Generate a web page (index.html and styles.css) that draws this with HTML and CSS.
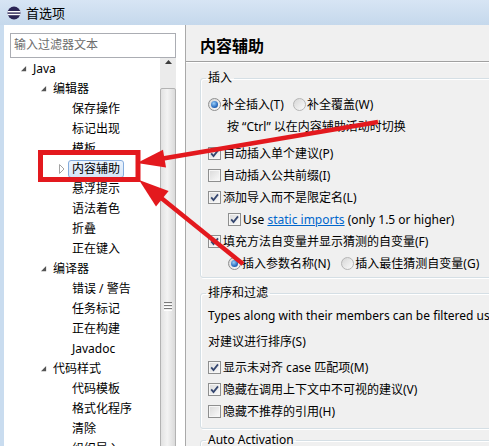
FILE: index.html
```html
<!DOCTYPE html>
<html lang="zh-CN">

<head>
    <meta charset="UTF-8">
    <title>首选项</title>
    <link rel="stylesheet" href="styles.css">
</head>

<body>
    <div class="window">
        <div class="titlebar">
            <svg class="app-icon" viewBox="0 0 14 14">
                <circle cx="7" cy="7" r="6.5" fill="#2c2656"/>
                <rect x="0.5" y="5" width="13" height="1.4" fill="#fff"/>
                <rect x="0.5" y="7.8" width="13" height="1.4" fill="#fff"/>
            </svg>
            <span>首选项</span>
        </div>

        <div class="content">
            <!-- left: filter + tree -->
            <aside class="nav">
                <div class="filter">输入过滤器文本</div>
                <div class="tree-wrap">
                    <ul class="tree">
                        <li class="item lv0"><span class="twisty"><svg class="open" viewBox="0 0 7 7"><polygon points="6,0 6,6 0,6"/></svg></span><span class="label">Java</span></li>
                        <li class="item lv1"><span class="twisty"><svg class="open" viewBox="0 0 7 7"><polygon points="6,0 6,6 0,6"/></svg></span><span class="label">编辑器</span></li>
                        <li class="item lv2"><span class="twisty"></span><span class="label">保存操作</span></li>
                        <li class="item lv2"><span class="twisty"></span><span class="label">标记出现</span></li>
                        <li class="item lv2"><span class="twisty"></span><span class="label">模板</span></li>
                        <li class="item lv2"><span class="twisty"><svg class="closed" viewBox="0 0 6 10"><polygon points="0.5,0.5 5,5 0.5,9.5"/></svg></span><span class="label selected">内容辅助</span></li>
                        <li class="item lv2"><span class="twisty"></span><span class="label">悬浮提示</span></li>
                        <li class="item lv2"><span class="twisty"></span><span class="label">语法着色</span></li>
                        <li class="item lv2"><span class="twisty"></span><span class="label">折叠</span></li>
                        <li class="item lv2"><span class="twisty"></span><span class="label">正在键入</span></li>
                        <li class="item lv1"><span class="twisty"><svg class="open" viewBox="0 0 7 7"><polygon points="6,0 6,6 0,6"/></svg></span><span class="label">编译器</span></li>
                        <li class="item lv2"><span class="twisty"></span><span class="label">错误 / 警告</span></li>
                        <li class="item lv2"><span class="twisty"></span><span class="label">任务标记</span></li>
                        <li class="item lv2"><span class="twisty"></span><span class="label">正在构建</span></li>
                        <li class="item lv2"><span class="twisty"></span><span class="label">Javadoc</span></li>
                        <li class="item lv1"><span class="twisty"><svg class="open" viewBox="0 0 7 7"><polygon points="6,0 6,6 0,6"/></svg></span><span class="label">代码样式</span></li>
                        <li class="item lv2"><span class="twisty"></span><span class="label">代码模板</span></li>
                        <li class="item lv2"><span class="twisty"></span><span class="label">格式化程序</span></li>
                        <li class="item lv2"><span class="twisty"></span><span class="label">清除</span></li>
                        <li class="item lv2"><span class="twisty"></span><span class="label">组织导入</span></li>
                    </ul>
                    <div class="scrollbar">
                        <div class="sb-up"><svg viewBox="0 0 7 4"><polygon points="0,4 3.5,0 7,4"/></svg></div>
                        <div class="sb-thumb"><span class="grip"></span></div>
                    </div>
                </div>
            </aside>

            <!-- right: preference page -->
            <main class="page">
                <h1>内容辅助</h1>

                <fieldset class="group">
                    <legend>插入</legend>
                    <div class="row first">
                        <span class="radio on"></span><span>补全插入(T)</span>
                        <span class="radio alt"></span><span>补全覆盖(W)</span>
                    </div>
                    <div class="row hint">按 “Ctrl” 以在内容辅助活动时切换</div>
                    <div class="row spaced"><span class="box"><svg viewBox="0 0 11 11"><path d="M2.2 5.4l2.3 2.6L9 2.4"/></svg></span><span>自动插入单个建议(P)</span></div>
                    <div class="row"><span class="box"></span><span>自动插入公共前缀(I)</span></div>
                    <div class="row"><span class="box"><svg viewBox="0 0 11 11"><path d="M2.2 5.4l2.3 2.6L9 2.4"/></svg></span><span>添加导入而不是限定名(L)</span></div>
                    <div class="row nested"><span class="box"><svg viewBox="0 0 11 11"><path d="M2.2 5.4l2.3 2.6L9 2.4"/></svg></span><span>Use <a class="link">static imports</a> (only 1.5 or higher)</span></div>
                    <div class="row"><span class="box"><svg viewBox="0 0 11 11"><path d="M2.2 5.4l2.3 2.6L9 2.4"/></svg></span><span>填充方法自变量并显示猜测的自变量(F)</span></div>
                    <div class="row nested">
                        <span class="radio on"></span><span>插入参数名称(N)</span>
                        <span class="radio alt wide"></span><span>插入最佳猜测自变量(G)</span>
                    </div>
                </fieldset>

                <fieldset class="group sorting">
                    <legend>排序和过滤</legend>
                    <div class="row first">Types along with their members can be filtered using type filters.</div>
                    <div class="row gap">对建议进行排序(S)</div>
                    <div class="row gap"><span class="box"><svg viewBox="0 0 11 11"><path d="M2.2 5.4l2.3 2.6L9 2.4"/></svg></span><span>显示未对齐 case 匹配项(M)</span></div>
                    <div class="row"><span class="box"><svg viewBox="0 0 11 11"><path d="M2.2 5.4l2.3 2.6L9 2.4"/></svg></span><span>隐藏在调用上下文中不可视的建议(V)</span></div>
                    <div class="row"><span class="box"></span><span>隐藏不推荐的引用(H)</span></div>
                </fieldset>

                <fieldset class="group auto">
                    <legend>Auto Activation</legend>
                </fieldset>
            </main>
        </div>

        <!-- red annotations drawn over the screenshot -->
        <svg class="annotations" viewBox="0 0 489 446">
            <rect x="40.5" y="152.5" width="97.5" height="27" fill="none" stroke="#e3191e" stroke-width="5"/>
            <line x1="378" y1="122" x2="160" y2="159" stroke="#e3191e" stroke-width="4.5"/>
            <polygon points="137,163 166,167.6 163,149.8" fill="#e3191e"/>
            <line x1="243" y1="264" x2="160" y2="197" stroke="#e3191e" stroke-width="4.5"/>
            <polygon points="139,180 168.6,191 156,206.6" fill="#e3191e"/>
        </svg>
    </div>
</body>

</html>
```

FILE: styles.css
```css
* {
    margin: 0;
    padding: 0;
    box-sizing: border-box;
}

body {
    font-family: "Noto Sans", "Noto Sans CJK SC", sans-serif;
    font-size: 12px;
    color: #000;
    background-color: #c9dcef;
}

.window {
    position: relative;
    width: 489px;
    height: 446px;
    overflow: hidden;
    background-color: #c9dcef;
}

/* title bar */

.titlebar {
    height: 25px;
    display: flex;
    align-items: center;
    padding-left: 7px;
    background: linear-gradient(#d7e5f4, #c5d8ec);
    font-size: 13px;
}

.app-icon {
    width: 14px;
    height: 14px;
    margin-right: 5px;
}

.content {
    display: flex;
    height: 421px;
    margin-left: 4px;
}

/* navigation tree */

.nav {
    width: 182px;
    background-color: #fff;
    border-right: 1px solid #a9a9a9;
    display: flex;
    flex-direction: column;
}

.filter {
    width: 166px;
    height: 25px;
    margin: 8px 0 0 6px;
    border: 1px solid #abadb3;
    color: #6d6d6d;
    padding-left: 3px;
    line-height: 22px;
}

.tree-wrap {
    flex: 1;
    display: flex;
    padding-right: 9px;
    overflow: hidden;
}

.tree {
    flex: 1;
    list-style: none;
    padding-top: 1px;
}

.item {
    height: 20px;
    display: flex;
    align-items: center;
    white-space: nowrap;
}

.lv0 { padding-left: 13px; }
.lv1 { padding-left: 33px; }
.lv2 { padding-left: 52px; }

.twisty {
    width: 12px;
    height: 20px;
    display: flex;
    align-items: center;
    justify-content: center;
}

.twisty .open {
    width: 6px;
    height: 6px;
    fill: #555;
    margin-left: 1px;
}

.twisty .closed {
    width: 6px;
    height: 10px;
    fill: #fff;
    stroke: #a3a3a3;
    stroke-width: 1;
}

.label {
    height: 18px;
    line-height: 16px;
    padding: 0 3px;
    border: 1px solid transparent;
    border-radius: 3px;
}

.label.selected {
    background: linear-gradient(#ebf3fc, #d6e5f6);
    border-color: #84acdd;
}

.scrollbar {
    width: 16px;
    background-color: #ebebeb;
    display: flex;
    flex-direction: column;
}

.sb-up {
    height: 18px;
    display: flex;
    align-items: center;
    justify-content: center;
    padding-top: 2px;
}

.sb-up svg {
    width: 7px;
    height: 4px;
    fill: #3d3d3d;
}

.sb-thumb {
    flex: none;
    height: 430px;
    margin: 24px 0 0 0;
    border: 1px solid #b3b3b3;
    border-radius: 2px;
    background: linear-gradient(to right, #e2e2e2, #f3f3f3 45%, #dadada);
    display: flex;
    align-items: center;
    justify-content: center;
}

.grip {
    width: 8px;
    height: 9px;
    background: repeating-linear-gradient(#7a7a7a 0 1px, transparent 1px 2px, #fff 2px 3px);
    margin-top: 6px;
}

/* preference page */

.page {
    flex: 1;
    background-color: #f0f0f0;
    overflow: hidden;
}

h1 {
    height: 37px;
    padding: 4px 0 0 14px;
    display: flex;
    align-items: center;
    font-size: 16px;
    font-weight: bold;
    border-bottom: 1px solid #a0a0a0;
    box-shadow: 0 1px 0 #fff;
}

.group {
    margin: 8px -40px 0 14px;
    padding: 0 0 3px 7px;
    border: 1px solid #d5dfe5;
    border-radius: 3px;
    box-shadow: inset 1px 1px 0 #fff, 1px 1px 0 #fff;
}

.group legend {
    margin-left: -2px;
    padding: 0 2px;
    line-height: 16px;
}

.sorting {
    margin-top: 7px;
    padding-bottom: 6px;
}

.auto {
    margin-top: 3px;
    height: 60px;
}

.row {
    height: 22px;
    display: flex;
    align-items: center;
    white-space: nowrap;
}

.row.first { margin-top: 7px; }
.sorting .row.first { margin-top: 3px; }
.row.spaced { margin-top: 5px; }
.row.gap { margin-top: 4px; }
.row.hint { padding-left: 19px; }
.row.nested { padding-left: 20px; }

.box {
    width: 13px;
    height: 13px;
    margin-right: 2px;
    border: 1px solid #8e8f8f;
    background: linear-gradient(135deg, #d9d9d9, #fbfbfb);
    box-shadow: inset 0 0 0 1px #f6f6f6;
    display: flex;
    align-items: center;
    justify-content: center;
}

.box svg {
    width: 11px;
    height: 11px;
    fill: none;
    stroke: #34466f;
    stroke-width: 1.8;
}

.radio {
    width: 13px;
    height: 13px;
    margin-right: 1px;
    border: 1px solid #8e8f8f;
    border-radius: 50%;
    background: linear-gradient(135deg, #d6d6d6, #fbfbfb);
    display: flex;
    align-items: center;
    justify-content: center;
}

.radio.on::after {
    content: "";
    width: 7px;
    height: 7px;
    border-radius: 50%;
    background: radial-gradient(circle at 40% 35%, #9ad0fa, #2a6cbf 60%, #16458a);
}

.radio.alt {
    margin-left: 9px;
    border-color: #b5b5b5;
}

.radio.alt.wide {
    margin-left: 11px;
}

.link {
    color: #0066cc;
    text-decoration: underline;
}

.annotations {
    position: absolute;
    top: 0;
    left: 0;
    width: 489px;
    height: 446px;
    pointer-events: none;
}
```
